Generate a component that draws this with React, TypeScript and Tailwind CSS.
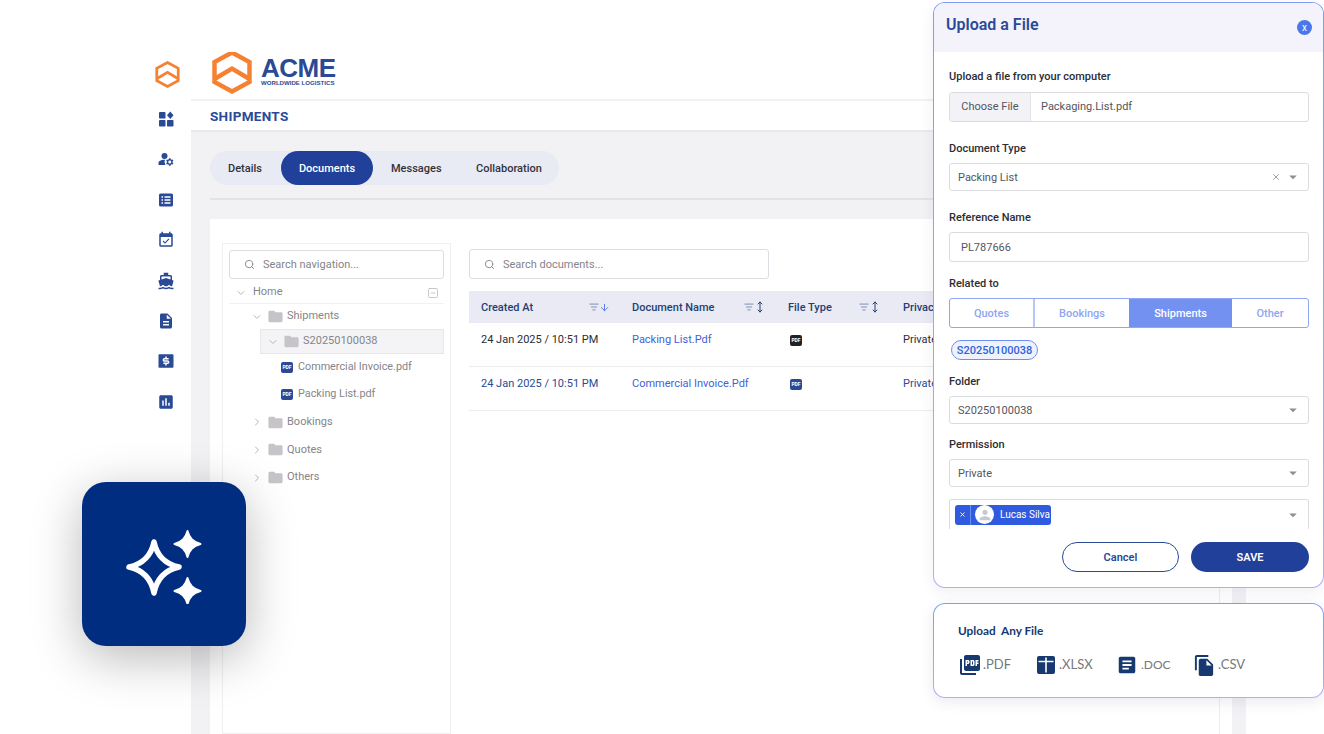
import React from "react";
import { Search, ChevronDown, ChevronRight, SquareMinus, ListFilter, ArrowDown, MoveVertical, X } from "lucide-react";
import {
  MdManageAccounts,
  MdEventAvailable,
  MdDirectionsBoat,
  MdDescription,
  MdAssessment,
  MdFolder,
  MdPictureAsPdf,
  MdArticle,
  MdFileCopy,
  MdArrowDropDown,
  MdPerson,
} from "react-icons/md";
import { RiMoneyDollarBoxFill } from "react-icons/ri";

const plex = "font-['Roboto',sans-serif]";

function LogoMark({ className }: { className: string }) {
  return (
    <svg viewBox="0 0 40 44" className={className} fill="none" stroke="#f58233" strokeWidth="4.5" strokeLinejoin="miter">
      <path d="M20 2.500 37.500 12v20L20 41.500 2.500 32V12z" />
      <path d="M2.500 29 20 18.500 37.500 29" />
    </svg>
  );
}

function DashIcon({ size }: { size: number }) {
  return (
    <svg viewBox="0 0 18 18" width={size} height={size} fill="currentColor">
      <rect x="2" y="2" width="6.500" height="6.500" rx="0.8" />
      <rect x="2" y="10" width="6.500" height="6.500" rx="0.8" />
      <rect x="10" y="10" width="6.500" height="6.500" rx="0.8" />
      <path d="M13.250 1.500 16.500 5.250 13.250 9 10 5.250z" />
    </svg>
  );
}

function ListIcon({ size }: { size: number }) {
  return (
    <svg viewBox="0 0 18 18" width={size} height={size}>
      <rect x="2" y="2.500" width="14" height="13" rx="1.500" fill="currentColor" />
      <path d="M4.500 6h1.500M7.500 6h6M4.500 9h1.500M7.500 9h6M4.500 12h1.500M7.500 12h6" stroke="#fff" strokeWidth="1.300" />
    </svg>
  );
}

function PdfBadge({ dark }: { dark?: boolean }) {
  return (
    <span className={`flex h-[11px] w-[12px] items-center justify-center rounded-[2px] text-[5px] leading-none font-bold text-white ${dark ? "bg-[#222226]" : "bg-[#2a4a96]"}`}>
      PDF
    </span>
  );
}

function TreeRow({ indent, open, label, selected }: { indent: string; open?: boolean; label: string; selected?: boolean }) {
  return (
    <div className={`flex h-[25px] items-center ${indent} ${selected ? "border border-[#e8e8ea] bg-[#f4f4f6]" : ""}`}>
      {open ? <ChevronDown size={12} className="text-[#b5b5b8]" /> : <ChevronRight size={12} className="text-[#b5b5b8]" />}
      <MdFolder size={17} className="ml-[4px] text-[#c6c4c8]" />
      <span className="ml-[3px] text-[11px] text-[#85858a]">{label}</span>
    </div>
  );
}

function FileRow({ label, className }: { label: string; className: string }) {
  return (
    <div className={`flex items-center gap-[5px] pl-[52px] ${className}`}>
      <PdfBadge />
      <span className="text-[10.800px] text-[#85858a]">{label}</span>
    </div>
  );
}

function Field({ label, value, className, clear }: { label: string; value: string; className: string; clear?: boolean }) {
  return (
    <div className={className}>
      <div className="text-[11px] leading-[14px] font-medium text-[#2d2d33]">{label}</div>
      <div className="mt-[7px] flex h-[28px] items-center rounded-[3px] border border-[#dcdce0] pr-[6px] pl-[8px] text-[11px] text-[#55555c]">
        <span className="flex-1 pt-[2px]">{value}</span>
        {clear && <X size={10} className="mr-[3px] text-[#8d8d92]" />}
        <MdArrowDropDown size={18} className="text-[#8d8d92]" />
      </div>
    </div>
  );
}

function HeaderCell({ label, width, sorted }: { label: string; width: string; sorted?: boolean }) {
  return (
    <div className={`flex items-center pl-[12px] ${width}`}>
      <span className="flex-1 pt-[2px] text-[11px] font-medium text-[#253f73]">{label}</span>
      <ListFilter size={10} className="text-[#6b7fa8]" />
      {sorted ? (
        <ArrowDown size={11} className="mr-[10px] text-[#4f74e0]" />
      ) : (
        <MoveVertical size={12} className="mr-[10px] text-[#253f73]" />
      )}
    </div>
  );
}

function DocRow({ name, blue, dark }: { name: string; blue?: boolean; dark?: boolean }) {
  const text = blue ? "text-[#2a4a96]" : "text-[#2d2d33]";
  return (
    <div className="flex h-[44px] border-b border-[#ececf0] pt-[10px] text-[11px] leading-[14px]">
      <div className={`w-[151px] pl-[12px] ${text}`}>24 Jan 2025 / 10:51 PM</div>
      <div className="w-[156px] pl-[12px] text-[#3f62d8]">{name}</div>
      <div className="w-[115px] pl-[14px] pt-[2px]">
        <PdfBadge dark={dark} />
      </div>
      <div className={`pl-[12px] ${text}`}>Private</div>
    </div>
  );
}

function FileKind({ icon, label, className, textClass }: { icon: React.ReactNode; label: string; className: string; textClass: string }) {
  return (
    <div className={`flex items-center ${className}`}>
      {icon}
      <span className={`text-[#77777c] ${textClass}`}>{label}</span>
    </div>
  );
}

export default function App() {
  const navIcons = [
    DashIcon,
    MdManageAccounts,
    ListIcon,
    MdEventAvailable,
    MdDirectionsBoat,
    MdDescription,
    RiMoneyDollarBoxFill,
    MdAssessment,
  ];

  return (
    <div className={`relative h-[734px] w-[1324px] overflow-hidden bg-white ${plex}`}>
      <div className="flex h-full w-[1246px] pt-[52px] pl-[140px]">
        {/* sidebar */}
        <aside className="flex w-[51px] shrink-0 flex-col items-center bg-white">
          <LogoMark className="mt-[9px] ml-[4px] h-[27px] w-[25px]" />
          <div className="mt-[22px] flex flex-col gap-[22.400px] text-[#2a4a96]">
            {navIcons.map((Icon, i) => (
              <Icon key={i} size={18} />
            ))}
          </div>
        </aside>

        <main className="flex min-w-0 flex-1 flex-col bg-[#f2f1f4]">
          <div className="flex h-[47px] shrink-0 items-start overflow-hidden bg-white pl-[21px]">
            <LogoMark className="-mt-[2px] h-[44px] w-[40px] shrink-0" />
            <div className="mt-[5px] ml-[9px] flex flex-col font-['Liberation_Sans',sans-serif] font-bold text-[#2a4a96]">
              <span className="text-[26px] leading-[23px] tracking-[-0.5px]">ACME</span>
              <span className="text-[6.100px] leading-[6px]">WORLDWIDE LOGISTICS</span>
            </div>
          </div>
          <div className="mt-[2px] flex h-[31px] shrink-0 items-center border-b-2 border-[#e9e9ec] bg-white pt-px pl-[19px] text-[13.500px] font-bold tracking-[0.3px] text-[#2a4a96]">
            SHIPMENTS
          </div>

          <div className="flex flex-1 flex-col pt-[19px] pr-[14px] pl-[19px]">
            <div className="flex h-[34px] w-[349px] items-center rounded-full bg-[#e8eaf4] text-[11px] font-medium text-[#33333a]">
              <span className="w-[71px] pt-[2px] pl-[18px]">Details</span>
              <span className="flex h-full w-[92px] items-center justify-center rounded-full bg-[#21409a] pt-[2px] text-white">Documents</span>
              <span className="ml-[18px] w-[85px] pt-[2px]">Messages</span>
              <span className="pt-[2px]">Collaboration</span>
            </div>
            <div className="mt-[13px] h-[2px] bg-[#e3e3e7]" />

            <div className="mt-[19px] flex flex-1 gap-[18px] bg-white pt-[24px] pr-[12px] pl-[12px]">
              <div className="flex w-[229px] shrink-0 flex-col border border-[#f0f0f2] px-[6px] pt-[6px]">
                <div className="flex h-[29px] items-center gap-[8px] rounded-[3px] border border-[#dcdce2] pl-[14px] text-[11px] text-[#85858a]">
                  <Search size={11} />
                  <span className="pt-[2px]">Search navigation...</span>
                </div>
                <div className="flex h-[25px] items-center border-b border-[#f2f2f4] pt-[3px] pr-[5px] pl-[6px] text-[11px] text-[#85858a]">
                  <ChevronDown size={12} className="text-[#b5b5b8]" />
                  <span className="ml-[6px] flex-1">Home</span>
                  <SquareMinus size={12} strokeWidth={1.500} className="text-[#b5b5b8]" />
                </div>
                <TreeRow indent="pl-[22px]" open label="Shipments" />
                <TreeRow indent="pl-[6px] ml-[31px]" open label="S20250100038" selected />
                <FileRow label="Commercial Invoice.pdf" className="mt-[6px] h-[14px]" />
                <FileRow label="Packing List.pdf" className="mt-[13px] h-[14px]" />
                <TreeRow indent="mt-[7px] pl-[22px] !h-[28px]" label="Bookings" />
                <TreeRow indent="pl-[22px] !h-[27.500px]" label="Quotes" />
                <TreeRow indent="pl-[22px] !h-[28px]" label="Others" />
              </div>

              <div className="flex min-w-0 flex-1 flex-col border-r border-[#eeeef0] pt-[6px] pr-[11px]">
                <div className="flex h-[30px] w-[300px] items-center gap-[8px] rounded-[3px] border border-[#dcdce2] pl-[14px] text-[11px] text-[#85858a]">
                  <Search size={11} />
                  <span className="pt-[2px]">Search documents...</span>
                </div>
                <div className="mt-[12px] flex h-[32px] shrink-0 bg-[#e9eaf4]">
                  <HeaderCell label="Created At" width="w-[151px]" sorted />
                  <HeaderCell label="Document Name" width="w-[156px]" />
                  <HeaderCell label="File Type" width="w-[115px]" />
                  <div className="flex items-center pt-[2px] pl-[12px] text-[11px] font-medium text-[#253f73]">Privacy</div>
                </div>
                <DocRow name="Packing List.Pdf" dark />
                <DocRow name="Commercial Invoice.Pdf" blue />
              </div>
            </div>
          </div>
        </main>
      </div>

      {/* sparkle tile */}
      <div className="absolute top-[482px] left-[82px] flex h-[164px] w-[164px] items-center justify-center rounded-[24px] bg-[#002d7f] shadow-[0_12px_50px_rgba(0,0,0,0.28)]">
        <svg viewBox="120 520 90 80" className="h-[80px] w-[90px] translate-x-[1px]" fill="none">
          <path d="M154 538c3 14 11 22 25 25-14 3-22 11-25 26-3-15-11-23-25-26 14-3 22-11 25-25z" stroke="#fff" strokeWidth="5.500" strokeLinejoin="round" />
          <path d="M187.500 527c2 7.500 5.500 11 13 13-7.500 2-11 5.500-13 13-2-7.500-5.500-11-13-13 7.500-2 11-5.500 13-13z" fill="#fff" stroke="#fff" strokeWidth="2" strokeLinejoin="round" />
          <path d="M187.500 574c2 7.500 5.500 11 13 13-7.500 2-11 5.500-13 13-2-7.500-5.500-11-13-13 7.500-2 11-5.500 13-13z" fill="#fff" stroke="#fff" strokeWidth="2" strokeLinejoin="round" />
        </svg>
      </div>

      {/* upload panel */}
      <div className="absolute top-[2px] left-[933px] h-[586px] w-[391px] rounded-[12px] bg-linear-to-b from-[#7f9cf2] to-[#b7a9f5] p-px shadow-[0_4px_14px_rgba(60,60,120,0.08)]">
        <div className="flex h-full flex-col overflow-hidden rounded-[11px] bg-white">
          <div className="flex h-[49px] shrink-0 bg-[#f4f3fb] pl-[12px]">
            <span className="mt-[11px] flex-1 text-[16px] leading-[22px] font-semibold text-[#2a4a96]">Upload a File</span>
            <span className="mt-[17px] mr-[11px] flex h-[15px] w-[15px] items-center justify-center rounded-full bg-[#4a78ea] text-[10px] text-white">x</span>
          </div>
          <div className="flex-1 pr-[14px] pl-[15px]">
            <div className="mt-[18px] text-[11px] leading-[14px] font-medium text-[#2d2d33]">Upload a file from your computer</div>
            <div className="mt-[8px] flex h-[30px] overflow-hidden rounded-[3px] border border-[#dcdce0] text-[11px] text-[#55555c]">
              <span className="flex w-[81px] items-center justify-center border-r border-[#e4e4e8] bg-[#f3f2f7]">Choose File</span>
              <span className="flex items-center pl-[10px]">Packaging.List.pdf</span>
            </div>
            <Field label="Document Type" value="Packing List" className="mt-[20px]" clear />
            <div className="mt-[20px] text-[11px] leading-[14px] font-medium text-[#2d2d33]">Reference Name</div>
            <div className="mt-[7px] flex h-[30px] items-center rounded-[3px] border border-[#dcdce0] pt-[2px] pl-[11px] text-[11px] text-[#55555c]">PL787666</div>
            <div className="mt-[15px] text-[11px] leading-[14px] font-medium text-[#2d2d33]">Related to</div>
            <div className="mt-[7px] flex h-[30px] overflow-hidden rounded-[3px] border border-[#8ea6f3] text-[11px] font-medium text-[#8ea6f3]">
              <span className="flex w-[85px] items-center justify-center border-r-2 border-[#b9c7f7] pt-[2px]">Quotes</span>
              <span className="flex w-[94px] items-center justify-center pt-[2px]">Bookings</span>
              <span className="flex w-[103px] items-center justify-center bg-[#7391f1] pt-[2px] text-white">Shipments</span>
              <span className="flex flex-1 items-center justify-center pt-[2px]">Other</span>
            </div>
            <div className="mt-[12px] ml-[2px] flex h-[20px] w-[87px] items-center justify-center rounded-full border border-[#6f8ff0] bg-[#eef2fd] pt-[2px] text-[11px] font-medium text-[#2f62d8]">S20250100038</div>
            <Field label="Folder" value="S20250100038" className="mt-[15px]" />
            <Field label="Permission" value="Private" className="mt-[14px]" />
            <div className="mt-[12px] flex h-[30px] items-center rounded-t-[3px] border border-b-0 border-[#dcdce0] pr-[6px] pl-[5px]">
              <div className="flex h-[20px] w-[96px] items-center rounded-[3px] bg-[#2f5be0] text-[10px] text-white">
                <X size={7} strokeWidth={3} className="mx-[4px]" />
                <span className="h-full w-px bg-[#6f8ff0]" />
                <span className="ml-[4px] flex h-[19px] w-[19px] items-center justify-center rounded-full bg-white">
                  <MdPerson size={16} className="text-[#c6c9d2]" />
                </span>
                <span className="ml-[6px]">Lucas Silva</span>
              </div>
              <span className="flex-1" />
              <MdArrowDropDown size={18} className="text-[#8d8d92]" />
            </div>
            <div className="mt-[13px] flex justify-end gap-[12px] text-[11px] font-semibold">
              <span className="flex h-[30px] w-[117px] items-center justify-center rounded-full border border-[#2a4a96] pt-[2px] text-[#2a4a96]">Cancel</span>
              <span className="flex h-[30px] w-[118px] items-center justify-center rounded-full bg-[#21409a] pt-[2px] text-white">SAVE</span>
            </div>
          </div>
        </div>
      </div>

      {/* file kinds */}
      <div className="absolute top-[603px] left-[933px] h-[95px] w-[391px] rounded-[12px] bg-linear-to-b from-[#7f9cf2] to-[#b7a9f5] p-px shadow-[0_4px_14px_rgba(60,60,120,0.1)]">
        <div className="h-full rounded-[11px] bg-white pt-[19px] pl-[24px] font-['Lato',sans-serif]">
          <div className="text-[11.800px] leading-[15px] font-bold whitespace-pre text-[#17396f]">Upload  Any File</div>
          <div className="mt-[15px] flex h-[24px] items-center">
            <FileKind className="w-[79px]" textClass="ml-[1px] text-[13px]" label=".PDF" icon={<MdPictureAsPdf size={24} className="text-[#17396f]" />} />
            <FileKind
              className="w-[79px]"
              textClass="ml-[4px] text-[13px]"
              label=".XLSX"
              icon={
                <svg viewBox="0 0 18 18" className="h-[18px] w-[18px]">
                  <rect width="18" height="18" rx="2" fill="#17396f" />
                  <path d="M1.500 5.500h15M9 1.500v15" stroke="#fff" strokeWidth="1.600" />
                </svg>
              }
            />
            <FileKind className="w-[77px]" textClass="ml-[3px] text-[12px]" label=".DOC" icon={<MdArticle size={22} className="text-[#17396f]" />} />
            <FileKind className="" textClass="ml-[2px] text-[13px]" label=".CSV" icon={<MdFileCopy size={23} className="text-[#17396f]" />} />
          </div>
        </div>
      </div>
    </div>
  );
}
